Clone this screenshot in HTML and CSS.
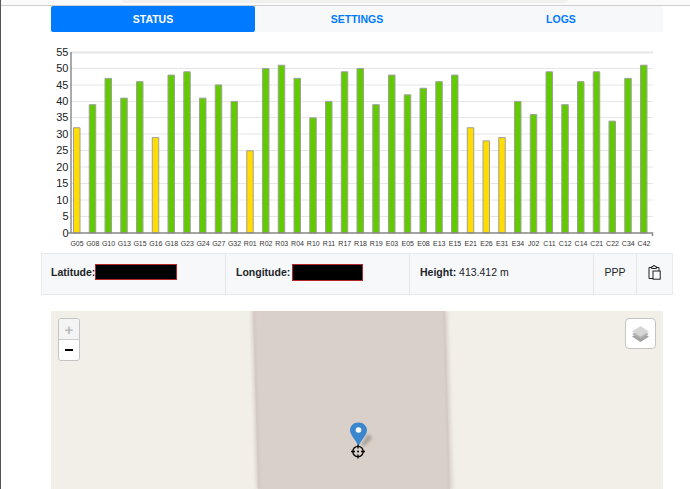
FILE: index.html
```html
<!DOCTYPE html>
<html lang="en">
<head>
<meta charset="utf-8">
<title>Status</title>
<link rel="stylesheet" href="styles.css">
</head>
<body>
<div class="topbar"><div class="topbar-field"></div></div>
<nav class="tabs">
  <a class="tab tab-active">STATUS</a>
  <a class="tab">SETTINGS</a>
  <a class="tab">LOGS</a>
</nav>
<svg class="chart" width="689" height="221" viewBox="1 32 689 221">
  <g class="grid">
    <line class="grid-top" x1="71" x2="653" y1="52.5" y2="52.5"/>
    <line x1="71" x2="653" y1="68.5" y2="68.5"/>
    <line x1="71" x2="653" y1="85" y2="85"/>
    <line x1="71" x2="653" y1="101.5" y2="101.5"/>
    <line x1="71" x2="653" y1="117.5" y2="117.5"/>
    <line x1="71" x2="653" y1="134" y2="134"/>
    <line x1="71" x2="653" y1="150.5" y2="150.5"/>
    <line x1="71" x2="653" y1="167" y2="167"/>
    <line x1="71" x2="653" y1="183.5" y2="183.5"/>
    <line x1="71" x2="653" y1="200" y2="200"/>
    <line x1="71" x2="653" y1="216.5" y2="216.5"/>
  </g>
  <g class="ylabels">
    <text x="68.5" y="56">55</text><text x="68.5" y="72">50</text><text x="68.5" y="88.5">45</text>
    <text x="68.5" y="105">40</text><text x="68.5" y="121">35</text><text x="68.5" y="137.5">30</text>
    <text x="68.5" y="154">25</text><text x="68.5" y="170.5">20</text><text x="68.5" y="187">15</text>
    <text x="68.5" y="203.5">10</text><text x="68.5" y="220">5</text><text x="68.5" y="236.5">0</text>
  </g>
  <g class="bars" transform="translate(0 233) scale(1 -3.29)">
    <rect class="warn" x="73.5" width="6.5" height="32"/>
    <rect class="good" x="89.25" width="6.5" height="39"/>
    <rect class="good" x="105" width="6.5" height="47"/>
    <rect class="good" x="120.75" width="6.5" height="41"/>
    <rect class="good" x="136.5" width="6.5" height="46"/>
    <rect class="warn" x="152.25" width="6.5" height="29"/>
    <rect class="good" x="168" width="6.5" height="48"/>
    <rect class="good" x="183.75" width="6.5" height="49"/>
    <rect class="good" x="199.5" width="6.5" height="41"/>
    <rect class="good" x="215.25" width="6.5" height="45"/>
    <rect class="good" x="231" width="6.5" height="40"/>
    <rect class="warn" x="246.75" width="6.5" height="25"/>
    <rect class="good" x="262.5" width="6.5" height="50"/>
    <rect class="good" x="278.25" width="6.5" height="51"/>
    <rect class="good" x="294" width="6.5" height="47"/>
    <rect class="good" x="309.75" width="6.5" height="35"/>
    <rect class="good" x="325.5" width="6.5" height="40"/>
    <rect class="good" x="341.25" width="6.5" height="49"/>
    <rect class="good" x="357" width="6.5" height="50"/>
    <rect class="good" x="372.75" width="6.5" height="39"/>
    <rect class="good" x="388.5" width="6.5" height="48"/>
    <rect class="good" x="404.25" width="6.5" height="42"/>
    <rect class="good" x="420" width="6.5" height="44"/>
    <rect class="good" x="435.75" width="6.5" height="46"/>
    <rect class="good" x="451.5" width="6.5" height="48"/>
    <rect class="warn" x="467.25" width="6.5" height="32"/>
    <rect class="warn" x="483" width="6.5" height="28"/>
    <rect class="warn" x="498.75" width="6.5" height="29"/>
    <rect class="good" x="514.5" width="6.5" height="40"/>
    <rect class="good" x="530.25" width="6.5" height="36"/>
    <rect class="good" x="546" width="6.5" height="49"/>
    <rect class="good" x="561.75" width="6.5" height="39"/>
    <rect class="good" x="577.5" width="6.5" height="46"/>
    <rect class="good" x="593.25" width="6.5" height="49"/>
    <rect class="good" x="609" width="6.5" height="34"/>
    <rect class="good" x="624.75" width="6.5" height="47"/>
    <rect class="good" x="640.5" width="6.5" height="51"/>
  </g>
  <path class="axis-y" d="M71 52V233"/>
  <path class="axis-x" d="M68 233H652.5V236"/>
  <g class="xlabels">
    <text x="77" y="246">G05</text><text x="92.75" y="246">G08</text><text x="108.5" y="246">G10</text>
    <text x="124.25" y="246">G13</text><text x="140" y="246">G15</text><text x="155.75" y="246">G16</text>
    <text x="171.5" y="246">G18</text><text x="187.25" y="246">G23</text><text x="203" y="246">G24</text>
    <text x="218.75" y="246">G27</text><text x="234.5" y="246">G32</text><text x="250.25" y="246">R01</text>
    <text x="266" y="246">R02</text><text x="281.75" y="246">R03</text><text x="297.5" y="246">R04</text>
    <text x="313.25" y="246">R10</text><text x="329" y="246">R11</text><text x="344.75" y="246">R17</text>
    <text x="360.5" y="246">R18</text><text x="376.25" y="246">R19</text><text x="392" y="246">E03</text>
    <text x="407.75" y="246">E05</text><text x="423.5" y="246">E08</text><text x="439.25" y="246">E13</text>
    <text x="455" y="246">E15</text><text x="470.75" y="246">E21</text><text x="486.5" y="246">E26</text>
    <text x="502.25" y="246">E31</text><text x="518" y="246">E34</text><text x="533.75" y="246">J02</text>
    <text x="549.5" y="246">C11</text><text x="565.25" y="246">C12</text><text x="581" y="246">C14</text>
    <text x="596.75" y="246">C21</text><text x="612.5" y="246">C22</text><text x="628.25" y="246">C34</text>
    <text x="644" y="246">C42</text>
  </g>
</svg>
<section class="info">
  <div class="cell cell-lat"><b>Latitude:</b><span class="redact redact-lat"></span></div>
  <div class="cell cell-lon"><b>Longitude:</b><span class="redact redact-lon"></span></div>
  <div class="cell cell-height"><b>Height:</b>&nbsp;413.412 m</div>
  <div class="cell cell-mode">PPP</div>
  <div class="cell cell-copy">
    <svg width="13" height="15" viewBox="0 0 13 15" class="clip">
      <path d="M3.5 2.5H1V13.5H5"/>
      <path d="M8.5 2.5H11V6"/>
      <path d="M3.5 3.5V1.7H5V.7H7V1.7H8.5V3.5Z"/>
      <rect x="5" y="6" width="7.2" height="8.2"/>
    </svg>
  </div>
</section>
<section class="map">
  <svg class="road" width="612" height="178" viewBox="0 0 612 178">
    <path class="road-halo" d="M201 0L206 178M395.500 0L401 178"/>
    <path class="road-fill" d="M202 0H394L399 178H207Z"/>
    <path class="road-edge" d="M203 0L208 178M393.500 0L398.500 178"/>
  </svg>
  <div class="zoom">
    <div class="zoom-btn zoom-off">+</div>
    <div class="zoom-btn"><span class="minus"></span></div>
  </div>
  <div class="layers">
    <svg width="17" height="16" viewBox="0 0 17 16">
      <path class="layer-c" d="M8.500 6L17 10.500L8.500 16L0 10.500Z"/>
      <path class="layer-b" d="M8.500 3.500L17 8L8.500 13L0 8Z"/>
      <path class="layer-a" d="M8.500 0L17 5.500L8.500 10.500L0 5.500Z"/>
    </svg>
  </div>
  <svg class="marker" width="32" height="44" viewBox="0 0 32 44">
    <path class="pin-shadow" d="M11 23L17 13C20 12 23 14 21 18L14 24Z"/>
    <path class="pin" d="M8.500 0.500C3.500 0.500 0 4 0 8.500C0 12.500 6 18.500 8.500 24C11 18.500 17 12.500 17 8.500C17 4 13.500 0.500 8.500 0.500Z"/>
    <circle class="pin-dot" cx="8.500" cy="8" r="2.800"/>
    <circle class="cross" cx="8" cy="29.500" r="5.200"/>
    <path class="cross" d="M8 22.500V26.500M8 32.500V36.500M1 29.500H5M11 29.500H15"/>
    <circle class="cross-dot" cx="8" cy="29.500" r="1"/>
  </svg>
</section>
</body>
</html>
```
FILE: styles.css
```css
html, body {
  margin: 0;
  padding: 0;
  background: #fff;
}

body {
  width: 690px;
  height: 489px;
  overflow: hidden;
  box-sizing: border-box;
  border-left: 1px solid #5a5555;
  font-family: "Liberation Sans", Arial, sans-serif;
  font-size: 10.5px;
  color: #212529;
}

.topbar {
  height: 5px;
  background: #fafafa;
  border-bottom: 1px solid #cfcfcf;
  display: flex;
  padding-left: 121px;
}

.topbar-field {
  width: 446px;
  height: 3px;
  background: #f1f1ef;
  border-radius: 0 0 3px 3px;
}

.tabs {
  display: grid;
  grid-template-columns: 204px 204px 204px;
  margin-left: 50px;
  width: 612px;
  height: 26px;
  background: #f7f8fa;
}

.tab {
  display: flex;
  align-items: center;
  justify-content: center;
  color: #007bff;
  font-weight: 700;
  font-size: 10.5px;
  border-radius: 2px;
}

.tab-active {
  background: #007bff;
  color: #fff;
}

.chart {
  display: block;
}

.grid line {
  stroke: #e6e6e6;
  stroke-width: 1;
}

.grid .grid-top {
  stroke-width: 2;
}

.ylabels text {
  font-size: 11px;
  text-anchor: end;
  fill: #222;
}

.xlabels text {
  font-size: 7px;
  text-anchor: middle;
  fill: #333;
}

.bars rect {
  stroke: #a09f9f;
  stroke-width: 1;
  vector-effect: non-scaling-stroke;
}

.bars .good {
  fill: #62cb00;
}

.bars .warn {
  fill: #ffdd00;
}

.axis-y {
  fill: none;
  stroke: #555;
  stroke-width: 1;
}

.axis-x {
  fill: none;
  stroke: #888;
  stroke-width: 1.5;
}

.info {
  display: grid;
  grid-template-columns: 184px 184px 184px 43px 37px;
  margin-left: 40px;
  width: 632px;
  height: 42px;
  box-sizing: border-box;
  background: #f7f8fa;
  border: 1px solid #e9eaec;
}

.cell {
  display: flex;
  align-items: center;
  border-right: 1px solid #e4e5e8;
  padding-left: 10px;
  padding-bottom: 4px;
  white-space: nowrap;
}

.cell b {
  font-weight: 700;
}

.cell-lat {
  padding-left: 9px;
}

.cell-copy {
  border-right: 0;
  padding-left: 0;
  justify-content: center;
}

.clip {
  margin-right: 2px;
}

.cell-mode {
  padding-left: 0;
  justify-content: center;
}

.redact {
  display: block;
  box-sizing: border-box;
  background: #000;
  border: 1px solid #b5262b;
}

.redact-lat {
  width: 82px;
  height: 16px;
}

.redact-lon {
  width: 71px;
  height: 17px;
  margin-left: 2px;
}

.clip {
  fill: none;
  stroke: #222;
  stroke-width: 1;
}

.map {
  position: relative;
  margin-top: 16px;
  margin-left: 50px;
  width: 612px;
  height: 178px;
  overflow: hidden;
  background: #f2efe9;
}

.road {
  position: absolute;
  left: 0;
  top: 0;
}

.road-halo {
  fill: none;
  stroke: #e6dfd9;
  stroke-width: 4;
  filter: blur(1px);
}

.road-fill {
  fill: #d9d0ca;
}

.road-edge {
  fill: none;
  stroke: #d0c6be;
  stroke-width: 2;
  filter: blur(1px);
}

.zoom {
  position: absolute;
  left: 7px;
  top: 7px;
  width: 20px;
  border: 1px solid #c4c4c2;
  border-radius: 3px;
  background: #fff;
}

.zoom-btn {
  height: 20px;
  display: flex;
  align-items: center;
  justify-content: center;
  font-family: "Liberation Sans", sans-serif;
  font-size: 15px;
  font-weight: 700;
  line-height: 1;
  color: #000;
}

.minus {
  display: block;
  width: 8px;
  height: 2px;
  background: #000;
}

.zoom-off {
  background: #f4f4f4;
  color: #bbb;
  border-bottom: 1px solid #ccc;
  border-radius: 3px 3px 0 0;
}

.layers {
  position: absolute;
  left: 574px;
  top: 7px;
  width: 29px;
  height: 29px;
  display: flex;
  align-items: center;
  justify-content: center;
  background: #fff;
  border: 1px solid #c4c4c2;
  border-radius: 4px;
}

.layer-a {
  fill: #d6d6d6;
}

.layer-b {
  fill: #b4b4b4;
}

.layer-c {
  fill: #a0a0a0;
}

.marker {
  position: absolute;
  left: 299px;
  top: 111px;
}

.pin {
  fill: #3a87cf;
}

.pin-shadow {
  fill: #857d75;
  opacity: 0.55;
  filter: blur(1.5px);
}

.pin-dot {
  fill: #fff;
}

.cross {
  fill: none;
  stroke: #000;
  stroke-width: 1.3;
}

.cross-dot {
  fill: #000;
}
```
